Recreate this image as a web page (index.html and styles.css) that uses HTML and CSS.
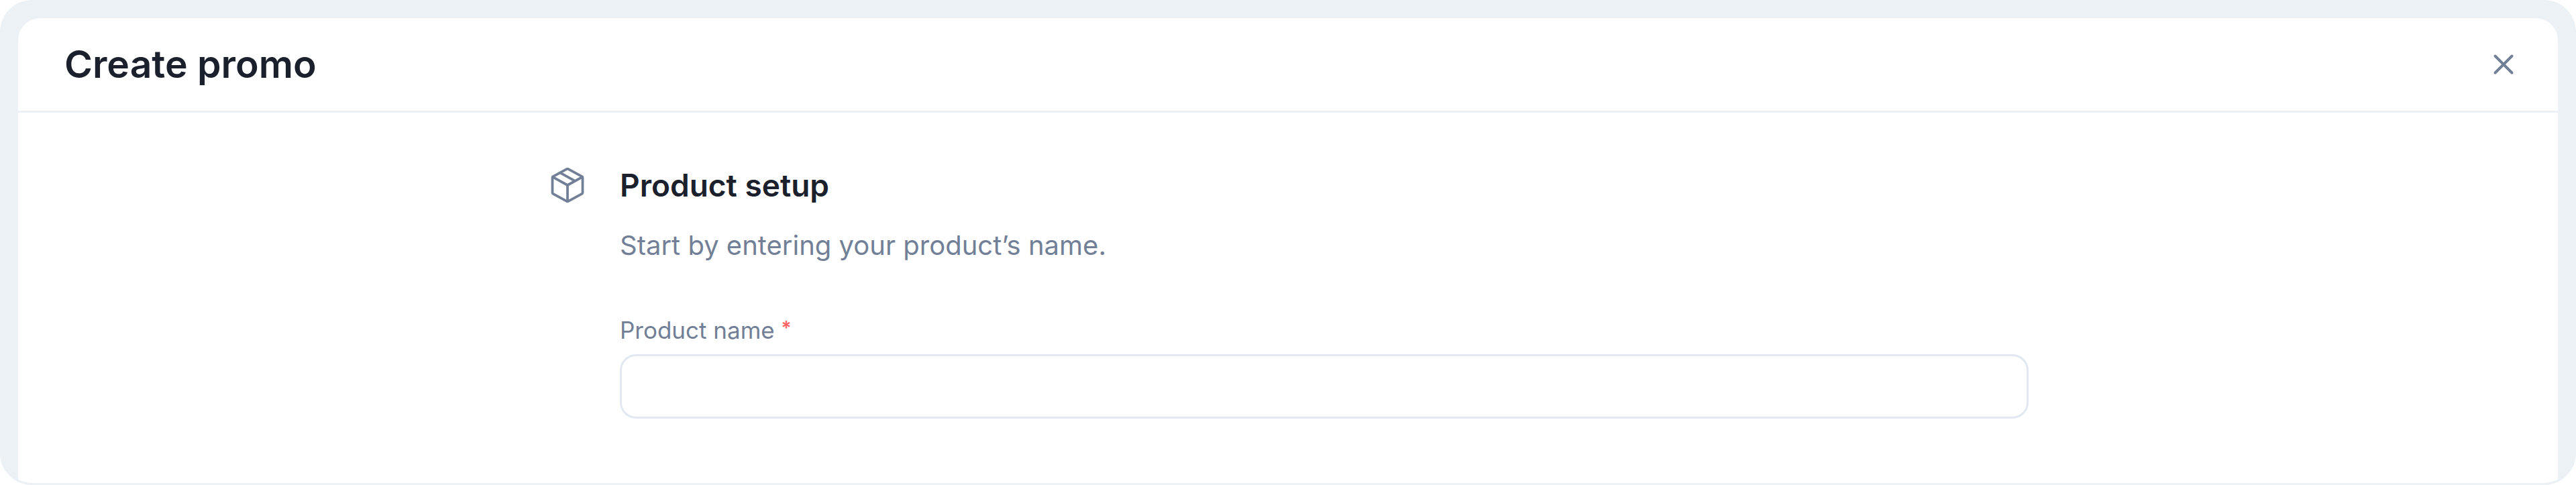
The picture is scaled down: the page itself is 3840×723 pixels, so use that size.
FILE: index.html
```html
<!DOCTYPE html>
<html lang="en">
<head>
<meta charset="utf-8">
<title>Create promo</title>
<link rel="stylesheet" href="styles.css">
</head>
<body>
<div class="frame">
  <main class="dialog">
    <header class="dialog-header">
      <h1 class="dialog-title">Create promo</h1>
      <button class="close" type="button" aria-label="Close">
        <svg class="close-icon" viewBox="0 0 48 48" aria-hidden="true"><path d="M11.500 11.500 36.500 36.500M36.500 11.500 11.500 36.500"/></svg>
      </button>
    </header>
    <form class="section">
      <svg class="section-icon" viewBox="0 0 256 256" aria-hidden="true">
        <path d="M131.800 25l88 48.200a8 8 0 0 1 4.200 7v95.600a8 8 0 0 1-4.200 7l-88 48.200a8 8 0 0 1-7.600 0l-88-48.200a8 8 0 0 1-4.200-7V80.200a8 8 0 0 1 4.200-7l88-48.200a8 8 0 0 1 7.600 0Z"/>
        <path d="M34 76l94 52 94-52M128 128v103M82 50l94 52"/>
      </svg>
      <div class="section-body">
        <h2 class="section-title">Product setup</h2>
        <p class="section-text">Start by entering your product’s name.</p>
        <label class="label" for="product-name">Product name <span class="required">*</span></label>
        <input class="input" id="product-name" type="text" required>
      </div>
    </form>
  </main>
</div>
</body>
</html>
```

FILE: styles.css
```css
* {
  box-sizing: border-box;
}

body {
  margin: 0;
  background: #fff;
  font-family: Inter, "Liberation Sans", sans-serif;
  color: #1a202c;
}

.frame {
  padding: 24px 24px 0;
  border: 3px solid #ebf1f5;
  border-radius: 48px;
  background: #ebf1f5;
  overflow: hidden;
}

.dialog {
  border-radius: 33px 33px 0 0;
  background: #fff;
  box-shadow: 0 0 0 3px #ebf1f5;
}

.dialog-header {
  display: flex;
  align-items: center;
  justify-content: space-between;
  padding: 33px 57px 33px 69px;
  border-bottom: 3px solid #ebf1f5;
}

.dialog-title {
  margin: 0;
  font-size: 57px;
  line-height: 72px;
  font-weight: 600;
}

.close {
  display: flex;
  padding: 0;
  border: 0;
  background: none;
  cursor: pointer;
}

.close-icon {
  width: 48px;
  height: 48px;
}

.close-icon,
.section-icon {
  fill: none;
  stroke: #718096;
  stroke-linecap: round;
  stroke-linejoin: round;
}

.close-icon {
  stroke-width: 4;
}

.section {
  display: flex;
  gap: 48px;
  max-width: 2208px;
  margin: 0 auto;
  padding: 78px 0 96px;
}

.section-icon {
  flex: none;
  width: 60px;
  height: 60px;
  stroke-width: 16;
}

.section-body {
  display: flex;
  flex: 1;
  flex-direction: column;
}

.section-title {
  margin: 0 0 30px;
  font-size: 46px;
  line-height: 60px;
  font-weight: 600;
}

.section-text {
  margin: 0 0 72px;
  font-size: 40px;
  line-height: 60px;
  color: #718096;
}

.label {
  margin-bottom: 12px;
  font-size: 35px;
  line-height: 48px;
  color: #718096;
}

.required {
  font-size: 28px;
  font-weight: 600;
  line-height: 1;
  vertical-align: 6px;
  color: #ff6464;
}

.input {
  width: 100%;
  height: 96px;
  padding: 0 36px;
  border: 3px solid #e2e8f0;
  border-radius: 24px;
  background: #fff;
  font: inherit;
  font-size: 42px;
  color: #1a202c;
}
```
